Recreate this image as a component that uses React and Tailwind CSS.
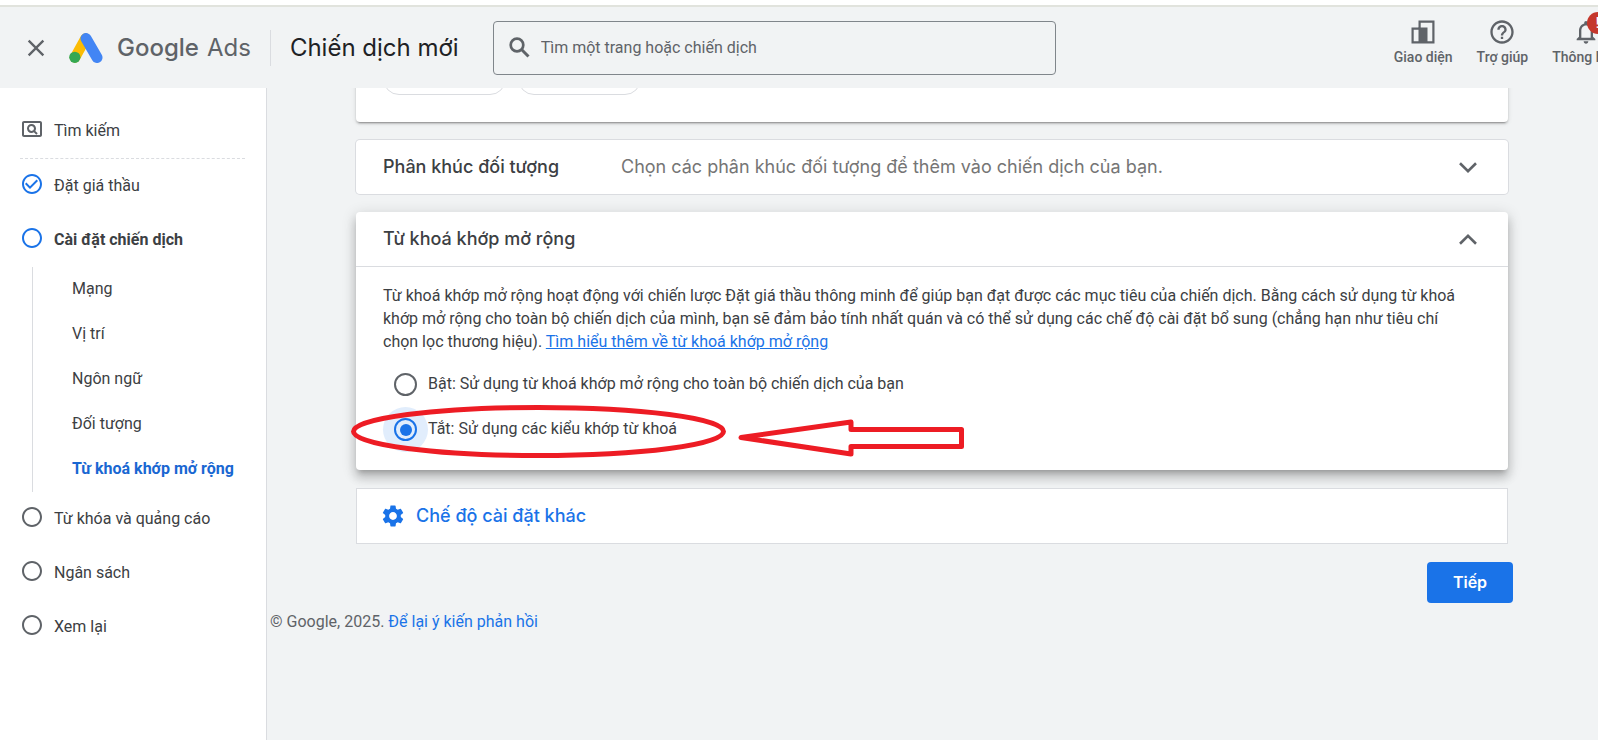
import React, { useState } from 'react';
import {
    MdClose,
    MdSettings,
    MdHelpOutline,
    MdNotificationsNone,
    MdOutlinePageview,
    MdCheckCircleOutline,
    MdRadioButtonUnchecked,
} from 'react-icons/md';

const SUB_STEPS = ['Mạng', 'Vị trí', 'Ngôn ngữ', 'Đối tượng', 'Từ khoá khớp mở rộng'];
const NEXT_STEPS = ['Từ khóa và quảng cáo', 'Ngân sách', 'Xem lại'];

const OPTIONS = [
    { id: 'on', label: 'Bật: Sử dụng từ khoá khớp mở rộng cho toàn bộ chiến dịch của bạn' },
    { id: 'off', label: 'Tắt: Sử dụng các kiểu khớp từ khoá' },
];

const AdsLogo = () => (
    <svg className="w-[34px] h-[30px] shrink-0" viewBox="0 0 34 30" fill="none" strokeLinecap="round">
        <path d="M6 24.5 16.5 5.5" stroke="#fbbc04" strokeWidth="10.5" />
        <path d="M17 5.5 28 24.5" stroke="#4285f4" strokeWidth="11" />
        <circle cx="5.8" cy="24.3" r="5.6" fill="#34a853" />
    </svg>
);

const SearchIcon = () => (
    <svg className="w-7 h-7 shrink-0" viewBox="0 0 28 28" fill="none" stroke="currentColor">
        <circle cx="11" cy="11" r="6.300" strokeWidth="2.700" />
        <path d="M15.800 15.800 22.500 22.500" strokeWidth="3" />
    </svg>
);

const AppearanceIcon = () => (
    <svg className="w-6 h-6" viewBox="0 0 24 24" fill="none" stroke="currentColor" strokeWidth="2.2">
        <path d="M8.600 9V1.600h13.800v20.800H9" />
        <path d="M9 8.600H1.600v13.800H9" />
        <path d="M7.500 7.500h9V23h-9z" fill="currentColor" stroke="none" />
    </svg>
);

const Chevron = ({ up }) => (
    <svg className="w-[18px] h-[11px] text-[#5f6368]" viewBox="0 0 18 11" fill="none" stroke="currentColor" strokeWidth="2.6">
        <path d={up ? 'M1 9.700 9 1.900 17 9.700' : 'M1 1.300 9 9.100 17 1.300'} />
    </svg>
);

const HeaderAction = ({ label, children }) => (
    <button className="flex flex-col items-center gap-[3px] text-sm font-medium text-[#5f6368] whitespace-nowrap">
        {children}
        {label}
    </button>
);

const Header = () => (
    <header className="flex items-center h-[83px] pl-[22px] border-t-2 border-[#e1e3dd] bg-[#f1f3f4] overflow-hidden">
        <button className="text-[#5f6368] shrink-0"><MdClose className="w-7 h-7" /></button>
        <a href="#" className="flex items-center ml-[19px] text-[#5f6368] whitespace-nowrap">
            <AdsLogo />
            <span className="ml-[14px] font-[Inter] text-2xl font-medium">Google</span>
            <span className="ml-2 font-[Inter] text-2xl">Ads</span>
        </a>
        <div className="w-px h-9 ml-[19px] bg-[#dadce0]" />
        <h1 className="ml-[19px] font-[Inter] text-2xl text-[#202124] whitespace-nowrap">Chiến dịch mới</h1>
        <label className="flex items-center flex-1 max-w-[563px] h-[54px] ml-[34px] px-3 border border-[#80868b] rounded text-[#5f6368]">
            <SearchIcon />
            <input type="text" placeholder="Tìm một trang hoặc chiến dịch" className="flex-1 ml-[7px] bg-transparent outline-none text-base placeholder:text-[#5f6368]" />
        </label>
        <div className="flex items-center shrink-0 ml-auto -mr-[21px] pb-2 gap-6">
            <HeaderAction label="Giao diện"><AppearanceIcon /></HeaderAction>
            <HeaderAction label="Trợ giúp"><MdHelpOutline className="w-7 h-7 -m-0.5" /></HeaderAction>
            <HeaderAction label="Thông báo">
                <span className="relative">
                    <MdNotificationsNone className="w-7 h-7 -m-0.5" />
                    <span className="absolute -top-2 left-[13px] w-[22px] h-[22px] rounded-full bg-[#c5372c] text-white text-sm leading-[22px] text-center">!</span>
                </span>
            </HeaderAction>
        </div>
    </header>
);

const Sidebar = () => (
    <nav className="w-[267px] shrink-0 pt-4 bg-white border-r border-[#dadce0] text-[#3c4043]">
        <a href="#" className="flex items-center h-[54px] pl-5 gap-[10px]">
            <MdOutlinePageview className="w-6 h-6 -mt-1 text-[#5f6368]" />
            Tìm kiếm
        </a>
        <div className="ml-5 mr-[21px] border-t border-dashed border-[#dadce0]" />
        <a href="#" className="flex items-center h-[54px] pl-5 gap-[10px]">
            <MdCheckCircleOutline className="w-6 h-6 -mt-1 text-[#1a73e8]" />
            Đặt giá thầu
        </a>
        <a href="#" className="flex items-center h-[54px] pl-5 gap-[10px] font-bold">
            <MdRadioButtonUnchecked className="w-6 h-6 -mt-1 text-[#1a73e8]" />
            Cài đặt chiến dịch
        </a>
        <ul className="ml-8 border-l border-[#dadce0]">
            {SUB_STEPS.map((step, i) => (
                <li key={step}>
                    <a href="#" className={i === SUB_STEPS.length - 1 ? 'flex items-center h-[45px] pl-[39px] pb-0.5 font-bold text-[#1967d2]' : 'flex items-center h-[45px] pl-[39px] pb-0.5'}>
                        {step}
                    </a>
                </li>
            ))}
        </ul>
        {NEXT_STEPS.map(step => (
            <a href="#" key={step} className="flex items-center h-[54px] pl-5 gap-[10px]">
                <MdRadioButtonUnchecked className="w-6 h-6 -mt-1 text-[#5f6368]" />
                {step}
            </a>
        ))}
    </nav>
);

// Hand-drawn marks over the chosen option
const Annotation = () => (
    <svg className="absolute left-0 top-0 w-[620px] h-[258px] overflow-visible pointer-events-none" viewBox="0 0 620 258" fill="none" stroke="#ed1c24" strokeWidth="5">
        <ellipse cx="182.500" cy="219.500" rx="185" ry="24" />
        <path d="M385 225.500 495 210v7.500h110.500v17H495v7.500z" strokeLinejoin="round" />
    </svg>
);

const App = () => {
    const [matchType, setMatchType] = useState('off');

    return (
        <div className="flex flex-col min-h-screen pt-[5px] bg-white font-[Roboto,sans-serif] text-base">
            <Header />
            <div className="flex flex-1">
                <Sidebar />
                <main className="flex-1 min-w-0 overflow-hidden bg-[#f1f3f4] text-[#3c4043]">
                    <div className="flex flex-col gap-[18px] ml-[89px] mr-[90px]">
                        {/* Bottom of the previous section */}
                        <div className="flex items-end h-16 -mt-[30px] px-[27px] pb-[27px] gap-3 bg-white rounded shadow-[0_3px_1px_-2px_rgba(0,0,0,0.2),0_2px_2px_0_rgba(0,0,0,0.14),0_1px_5px_0_rgba(0,0,0,0.12)]">
                            <span className="w-[123px] h-8 shrink-0 border border-[#dadce0] rounded-full" />
                            <span className="w-[123px] h-8 shrink-0 border border-[#dadce0] rounded-full" />
                        </div>

                        <button className="flex items-center h-[54px] pl-[27px] pr-[31px] bg-white rounded ring-1 ring-[#dadce0] font-[Inter] text-lg text-left">
                            <span className="w-[238px] shrink-0 font-medium">Phân khúc đối tượng</span>
                            <span className="flex-1 text-[#757575]">Chọn các phân khúc đối tượng để thêm vào chiến dịch của bạn.</span>
                            <Chevron />
                        </button>

                        <section className="relative bg-white rounded shadow-[0_5px_5px_-3px_rgba(0,0,0,0.2),0_8px_10px_1px_rgba(0,0,0,0.14),0_3px_14px_2px_rgba(0,0,0,0.12)]">
                            <button className="flex items-center justify-between w-full h-[55px] pl-[27px] pr-[31px] border-b border-[#dadce0] font-[Inter] text-lg font-medium">
                                Từ khoá khớp mở rộng
                                <Chevron up />
                            </button>
                            <div className="pt-[17px] pb-[18px] pl-[27px] pr-9">
                                <p className="leading-[23px]">
                                    Từ khoá khớp mở rộng hoạt động với chiến lược Đặt giá thầu thông minh để giúp bạn đạt được các mục tiêu của chiến dịch. Bằng cách sử dụng từ khoá khớp mở rộng cho toàn bộ chiến dịch của mình, bạn sẽ đảm bảo tính nhất quán và có thể sử dụng các chế độ cài đặt bổ sung (chẳng hạn như tiêu chí chọn lọc thương hiệu).{' '}
                                    <a href="#" className="text-[#1a73e8] underline">Tìm hiểu thêm về từ khoá khớp mở rộng</a>
                                </p>
                                <div className="mt-[9px]">
                                    {OPTIONS.map(option => (
                                        <label key={option.id} className="flex items-center h-[45px]">
                                            <span className={matchType === option.id ? 'flex items-center justify-center w-[45px] h-[45px] rounded-full bg-[#e1edfc]' : 'flex items-center justify-center w-[45px] h-[45px]'}>
                                                <input
                                                    type="radio"
                                                    name="match-type"
                                                    checked={matchType === option.id}
                                                    onChange={() => setMatchType(option.id)}
                                                    className="appearance-none grid place-items-center w-[23px] h-[23px] border-2 border-[#5f6368] rounded-full checked:border-[#1a73e8] before:w-3 before:h-3 before:rounded-full checked:before:bg-[#1a73e8]"
                                                />
                                            </span>
                                            <span className="pb-0.5">{option.label}</span>
                                        </label>
                                    ))}
                                </div>
                            </div>
                            <Annotation />
                        </section>

                        <button className="flex items-center h-14 pl-[23px] gap-[10px] bg-white border border-[#dadce0] font-[Inter] text-lg font-medium text-[#1a73e8]">
                            <MdSettings className="w-[26px] h-[26px]" />
                            Chế độ cài đặt khác
                        </button>
                    </div>

                    <div className="flex justify-end mt-[18px] mr-[85px]">
                        <button className="w-[86px] h-[41px] pb-0.5 rounded bg-[#1a73e8] font-[Inter] text-base font-semibold text-white">Tiếp</button>
                    </div>
                    <footer className="mt-[7px] pl-[3px] text-[#5f6368]">
                        © Google, 2025. <a href="#" className="text-[#1a73e8]">Để lại ý kiến phản hồi</a>
                    </footer>
                </main>
            </div>
        </div>
    );
};

export default App;
